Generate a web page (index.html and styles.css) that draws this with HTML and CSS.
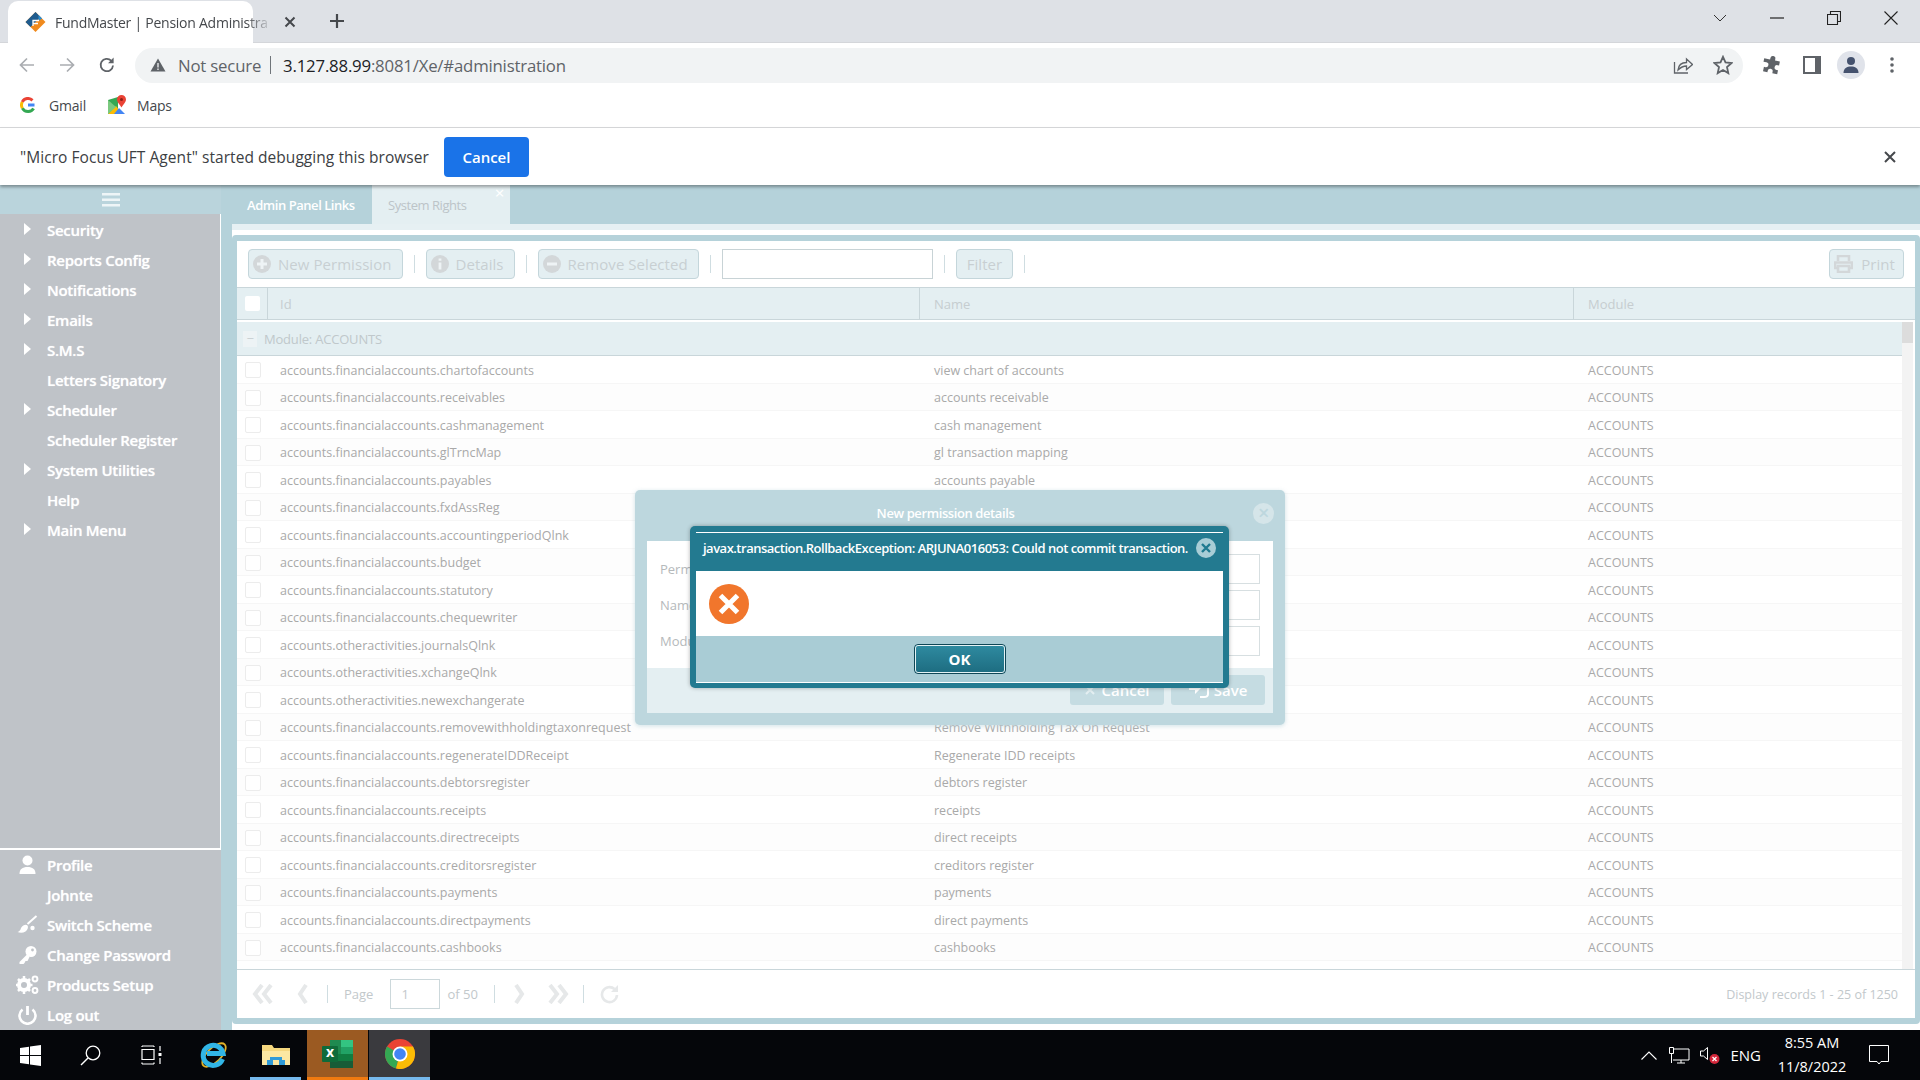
FILE: index.html
```html
<!DOCTYPE html>
<html lang="en">
<head>
    <meta charset="UTF-8">
    <title>FundMaster | Pension Administration</title>
    <link rel="stylesheet" href="styles.css">
</head>
<body>

    <!-- Browser tab strip -->
    <div class="tabstrip">
        <div class="browser-tab">
            <svg class="favicon" width="21" height="20" viewBox="0 0 20 20"><path d="M10 0 L20 10 L10 20 L0 10 Z" fill="#f08a1d"/><path d="M10 0 L0 10 L5 15 L13 7 L16.500 6.500Z" fill="#1f5c8f"/><path d="M13 3 L16.500 6.500 L13 9Z" fill="#2f8fd0"/><path d="M7.500 14V8.500h6M7.500 11.500h5" fill="none" stroke="#fff" stroke-width="1.300"/></svg>
            <span class="browser-tab-title">FundMaster | Pension Administra</span>
            <svg class="tab-close" width="12" height="12" viewBox="0 0 12 12"><path d="M1.500 1.500l9 9M10.500 1.500l-9 9" stroke="#45484c" stroke-width="2"/></svg>
        </div>
        <svg class="new-tab" width="16" height="16" viewBox="0 0 16 16"><path d="M8 1v14M1 8h14" stroke="#45484c" stroke-width="2.200"/></svg>
        <div class="window-controls">
            <svg width="14" height="14" viewBox="0 0 14 14"><path d="M1 4l6 6 6-6" fill="none" stroke="#333" stroke-width="1"/></svg>
            <svg width="14" height="14" viewBox="0 0 14 14"><path d="M0 7h14" stroke="#222" stroke-width="1.200"/></svg>
            <svg width="14" height="14" viewBox="0 0 14 14"><path d="M.5 3.500h10v10H.5zM3.500 3.500V.5h10v10h-3" fill="none" stroke="#222" stroke-width="1.100"/></svg>
            <svg width="14" height="14" viewBox="0 0 14 14"><path d="M.5.5l13 13M13.500.5l-13 13" stroke="#222" stroke-width="1.100"/></svg>
        </div>
    </div>

    <!-- Address bar -->
    <div class="toolbar">
        <svg class="nav-icon" width="18" height="18" viewBox="0 0 18 18"><path d="M16 9H3M9 2.500L2.500 9 9 15.500" fill="none" stroke="#aaadb1" stroke-width="1.700"/></svg>
        <svg class="nav-icon" width="18" height="18" viewBox="0 0 18 18"><path d="M2 9h13M9 2.500L15.500 9 9 15.500" fill="none" stroke="#aaadb1" stroke-width="1.700"/></svg>
        <svg class="nav-icon" width="18" height="18" viewBox="0 0 18 18"><path d="M15 9.500A6.200 6.200 0 1 1 13.200 4.600" fill="none" stroke="#5f6368" stroke-width="1.800"/><path d="M15.600 1.600v5.600H10z" fill="#5f6368"/></svg>
        <div class="omnibox">
            <svg width="16" height="16" viewBox="0 0 16 16"><path d="M8 1.500L15.500 14.500H.5Z" fill="#5f6368"/><path d="M8 6v4.500M8 11.500v1.500" stroke="#f1f3f4" stroke-width="1.300"/></svg>
            <span class="not-secure">Not secure</span>
            <span class="url-sep"></span>
            <span class="url"><b>3.127.88.99</b>:8081/Xe/#administration</span>
            <svg class="omni-share" width="20" height="20" viewBox="0 0 20 20"><path d="M1.500 7v11h13.500M5 15c.5-5 4-7.500 8.500-7.500V4l6 5.500-6 5v-3.500C10 11 7.500 12.500 5 15z" fill="none" stroke="#5f6368" stroke-width="1.300"/></svg>
            <svg class="omni-star" width="20" height="20" viewBox="0 0 20 20"><path d="M10 1.800l2.500 5.600 6.100.6-4.600 4.100 1.300 6-5.300-3.100-5.300 3.100 1.300-6L1.400 8l6.100-.6z" fill="none" stroke="#5f6368" stroke-width="1.800"/></svg>
        </div>
        <div class="toolbar-actions">
            <svg width="20" height="20" viewBox="0 0 20 20"><path d="M7 3.500a2.500 2.500 0 0 1 5 0V5h5v4h-1.500a2.500 2.500 0 0 0 0 5H17v4h-5v-1.500a2.500 2.500 0 0 0-5 0V18H2.500v-4.500H4a2.500 2.500 0 0 0 0-5H1V5h6z" fill="#5f6368" transform="rotate(12 10 10)"/></svg>
            <svg width="18" height="18" viewBox="0 0 18 18"><rect x="0" y="0" width="18" height="18" fill="#5f6368"/><rect x="2" y="2" width="10" height="14" fill="#fff"/></svg>
            <span class="avatar"><svg width="18" height="18" viewBox="0 0 18 18"><circle cx="9" cy="5" r="4" fill="#45526e"/><path d="M1.500 17c0-5 3.500-6.500 7.500-6.500s7.500 1.500 7.500 6.500z" fill="#45526e"/></svg></span>
            <svg class="toolbar-dots" width="6" height="18" viewBox="0 0 6 18"><circle cx="3" cy="3" r="1.800" fill="#5f6368"/><circle cx="3" cy="9" r="1.800" fill="#5f6368"/><circle cx="3" cy="15" r="1.800" fill="#5f6368"/></svg>
        </div>
    </div>

    <!-- Bookmarks -->
    <div class="bookmarks">
        <span class="bookmark">
            <svg width="16" height="16" viewBox="0 0 16 16"><path d="M14.500 8H8" stroke="#4285f4" stroke-width="3"/><path d="M13.600 11.500A6.500 6.500 0 0 1 8 14.500" fill="none" stroke="#34a853" stroke-width="3"/><path d="M8 14.500a6.500 6.500 0 0 1-5.700-3.400" fill="none" stroke="#34a853" stroke-width="3"/><path d="M2.300 11.100a6.500 6.500 0 0 1 0-6.200" fill="none" stroke="#fbbc05" stroke-width="3"/><path d="M2.300 4.900A6.500 6.500 0 0 1 12.500 3.300" fill="none" stroke="#ea4335" stroke-width="3"/></svg>
            Gmail
        </span>
        <span class="bookmark bookmark-maps">
            <svg width="20" height="20" viewBox="0 0 20 20"><path d="M1 5l10-3v16l-10 1z" fill="#34a853"/><path d="M1 19l8-8 6 8z" fill="#fbbc05"/><path d="M7 19l5-6 6 6z" fill="#4285f4"/><path d="M1 5l8 7-8 7z" fill="#7bc97f"/><path d="M14.500 0a4.500 4.500 0 0 1 4.500 4.500c0 3-3 5-4.500 8-1.500-3-4.500-5-4.500-8A4.500 4.500 0 0 1 14.500 0z" fill="#ea4335"/><circle cx="14.500" cy="4.500" r="1.500" fill="#8f1f17"/></svg>
            Maps
        </span>
    </div>

    <!-- Debugging notice -->
    <div class="infobar">
        <span class="infobar-text">"Micro Focus UFT Agent" started debugging this browser</span>
        <button class="infobar-cancel">Cancel</button>
        <svg class="infobar-close" width="12" height="12" viewBox="0 0 12 12"><path d="M1 1l10 10M11 1L1 11" stroke="#45484c" stroke-width="2"/></svg>
    </div>

    <!-- Application -->
    <div class="app">
        <div class="sidebar">
            <div class="sidebar-head">
                <svg width="18" height="14" viewBox="0 0 18 14"><path d="M0 0h18v2.500H0zM0 5.500h18V8H0zM0 11h18v2.500H0z" fill="#eef5f7"/></svg>
            </div>
            <ul class="menu">
                <li class="has-sub">Security</li>
                <li class="has-sub">Reports Config</li>
                <li class="has-sub">Notifications</li>
                <li class="has-sub">Emails</li>
                <li class="has-sub">S.M.S</li>
                <li>Letters Signatory</li>
                <li class="has-sub">Scheduler</li>
                <li>Scheduler Register</li>
                <li class="has-sub">System Utilities</li>
                <li>Help</li>
                <li class="has-sub">Main Menu</li>
            </ul>
            <ul class="user-menu">
                <li><svg width="22" height="20" viewBox="0 0 22 20"><circle cx="11" cy="5.500" r="5" fill="#fff"/><path d="M3 19c0-5 3-7 8-7s8 2 8 7z" fill="#fff"/></svg>Profile</li>
                <li><span class="icon-gap"></span>Johnte</li>
                <li><svg width="22" height="20" viewBox="0 0 22 20"><path d="M1 17c2-.5 3-2 3.500-4 2-3 5-4 6.500-2.500 1 1.500.5 4-2 6-2.500 1.500-5.500 1.500-8 .5z" fill="#fff"/><path d="M11 9l9-8" stroke="#fff" stroke-width="2"/><circle cx="16" cy="13" r="2.200" fill="#fff"/></svg>Switch Scheme</li>
                <li><svg width="22" height="20" viewBox="0 0 22 20"><circle cx="14.500" cy="6.500" r="5.500" fill="#fff"/><path d="M11 9l-8 8v2h4l1-1 1-2h2l2-4z" fill="#fff"/><circle cx="16" cy="5" r="1.400" fill="#bfc3c8"/></svg>Change Password</li>
                <li><svg width="23" height="20" viewBox="0 0 23 20"><circle cx="8" cy="10" r="5" fill="none" stroke="#fff" stroke-width="4"/><path d="M8 1v4M8 15v4M-.5 10h4M12.500 10h4M2 4l2.500 2.500M11.500 13.500L14 16M2 16l2.500-2.500M11.500 6.500L14 4" stroke="#fff" stroke-width="2.500"/><circle cx="19" cy="4" r="2.400" fill="none" stroke="#fff" stroke-width="2"/><circle cx="19" cy="15.500" r="2.400" fill="none" stroke="#fff" stroke-width="2"/></svg>Products Setup</li>
                <li><svg width="22" height="20" viewBox="0 0 22 20"><path d="M6 4.500a8 8 0 1 0 10 0" fill="none" stroke="#fff" stroke-width="2.600"/><path d="M11 1v9" stroke="#fff" stroke-width="2.800"/></svg>Log out</li>
            </ul>
        </div>

        <div class="main-content">
            <div class="tabbar">
                <div class="app-tab app-tab-active">Admin Panel Links</div>
                <div class="app-tab app-tab-open">System Rights<span class="app-tab-x">×</span></div>
            </div>
            <div class="tabbar-strip"></div>

            <div class="panel">
                <div class="grid-toolbar">
                    <button class="tool-btn tool-btn-new"><svg width="18" height="18" viewBox="0 0 18 18"><circle cx="9" cy="9" r="9" fill="#d3d7d9"/><path d="M9 4v10M4 9h10" stroke="#eef3f5" stroke-width="3"/></svg>New Permission</button>
                    <span class="tool-sep"></span>
                    <button class="tool-btn"><svg width="18" height="18" viewBox="0 0 18 18"><circle cx="9" cy="9" r="9" fill="#d3d7d9"/><path d="M9 7.500v7M9 3.500v2.200" stroke="#eef3f5" stroke-width="2.800"/></svg>Details</button>
                    <span class="tool-sep"></span>
                    <button class="tool-btn"><svg width="18" height="18" viewBox="0 0 18 18"><circle cx="9" cy="9" r="9" fill="#d3d7d9"/><path d="M4 9h10" stroke="#eef3f5" stroke-width="3"/></svg>Remove Selected</button>
                    <span class="tool-sep"></span>
                    <input class="filter-input" type="text">
                    <span class="tool-sep"></span>
                    <button class="tool-btn">Filter</button>
                    <span class="tool-sep"></span>
                    <button class="tool-btn tool-btn-print"><svg width="19" height="18" viewBox="0 0 19 18"><path d="M4 6V1h11v5M4 13H1V7.500h17V13h-3M4 11h11v6H4z" fill="none" stroke="#d3d7d9" stroke-width="2.600"/></svg>Print</button>
                </div>

                <div class="grid-head">
                    <div class="col-check"><span class="head-check"></span></div>
                    <div class="col-id">Id</div>
                    <div class="col-name">Name</div>
                    <div class="col-module">Module</div>
                </div>

                <div class="grid-scroll">
                    <div class="grid-body">
                        <div class="group-row"><span class="group-toggle">−</span>Module: ACCOUNTS</div>
                        <div class="row"><div class="col-check"><span class="check"></span></div><div class="col-id">accounts.financialaccounts.chartofaccounts</div><div class="col-name">view chart of accounts</div><div class="col-module">ACCOUNTS</div></div>
                        <div class="row"><div class="col-check"><span class="check"></span></div><div class="col-id">accounts.financialaccounts.receivables</div><div class="col-name">accounts receivable</div><div class="col-module">ACCOUNTS</div></div>
                        <div class="row"><div class="col-check"><span class="check"></span></div><div class="col-id">accounts.financialaccounts.cashmanagement</div><div class="col-name">cash management</div><div class="col-module">ACCOUNTS</div></div>
                        <div class="row"><div class="col-check"><span class="check"></span></div><div class="col-id">accounts.financialaccounts.glTrncMap</div><div class="col-name">gl transaction mapping</div><div class="col-module">ACCOUNTS</div></div>
                        <div class="row"><div class="col-check"><span class="check"></span></div><div class="col-id">accounts.financialaccounts.payables</div><div class="col-name">accounts payable</div><div class="col-module">ACCOUNTS</div></div>
                        <div class="row"><div class="col-check"><span class="check"></span></div><div class="col-id">accounts.financialaccounts.fxdAssReg</div><div class="col-name"></div><div class="col-module">ACCOUNTS</div></div>
                        <div class="row"><div class="col-check"><span class="check"></span></div><div class="col-id">accounts.financialaccounts.accountingperiodQlnk</div><div class="col-name"></div><div class="col-module">ACCOUNTS</div></div>
                        <div class="row"><div class="col-check"><span class="check"></span></div><div class="col-id">accounts.financialaccounts.budget</div><div class="col-name"></div><div class="col-module">ACCOUNTS</div></div>
                        <div class="row"><div class="col-check"><span class="check"></span></div><div class="col-id">accounts.financialaccounts.statutory</div><div class="col-name"></div><div class="col-module">ACCOUNTS</div></div>
                        <div class="row"><div class="col-check"><span class="check"></span></div><div class="col-id">accounts.financialaccounts.chequewriter</div><div class="col-name"></div><div class="col-module">ACCOUNTS</div></div>
                        <div class="row"><div class="col-check"><span class="check"></span></div><div class="col-id">accounts.otheractivities.journalsQlnk</div><div class="col-name"></div><div class="col-module">ACCOUNTS</div></div>
                        <div class="row"><div class="col-check"><span class="check"></span></div><div class="col-id">accounts.otheractivities.xchangeQlnk</div><div class="col-name"></div><div class="col-module">ACCOUNTS</div></div>
                        <div class="row"><div class="col-check"><span class="check"></span></div><div class="col-id">accounts.otheractivities.newexchangerate</div><div class="col-name"></div><div class="col-module">ACCOUNTS</div></div>
                        <div class="row"><div class="col-check"><span class="check"></span></div><div class="col-id">accounts.financialaccounts.removewithholdingtaxonrequest</div><div class="col-name">Remove Withholding Tax On Request</div><div class="col-module">ACCOUNTS</div></div>
                        <div class="row"><div class="col-check"><span class="check"></span></div><div class="col-id">accounts.financialaccounts.regenerateIDDReceipt</div><div class="col-name">Regenerate IDD receipts</div><div class="col-module">ACCOUNTS</div></div>
                        <div class="row"><div class="col-check"><span class="check"></span></div><div class="col-id">accounts.financialaccounts.debtorsregister</div><div class="col-name">debtors register</div><div class="col-module">ACCOUNTS</div></div>
                        <div class="row"><div class="col-check"><span class="check"></span></div><div class="col-id">accounts.financialaccounts.receipts</div><div class="col-name">receipts</div><div class="col-module">ACCOUNTS</div></div>
                        <div class="row"><div class="col-check"><span class="check"></span></div><div class="col-id">accounts.financialaccounts.directreceipts</div><div class="col-name">direct receipts</div><div class="col-module">ACCOUNTS</div></div>
                        <div class="row"><div class="col-check"><span class="check"></span></div><div class="col-id">accounts.financialaccounts.creditorsregister</div><div class="col-name">creditors register</div><div class="col-module">ACCOUNTS</div></div>
                        <div class="row"><div class="col-check"><span class="check"></span></div><div class="col-id">accounts.financialaccounts.payments</div><div class="col-name">payments</div><div class="col-module">ACCOUNTS</div></div>
                        <div class="row"><div class="col-check"><span class="check"></span></div><div class="col-id">accounts.financialaccounts.directpayments</div><div class="col-name">direct payments</div><div class="col-module">ACCOUNTS</div></div>
                        <div class="row"><div class="col-check"><span class="check"></span></div><div class="col-id">accounts.financialaccounts.cashbooks</div><div class="col-name">cashbooks</div><div class="col-module">ACCOUNTS</div></div>
                    </div>
                    <div class="scrollbar"><span class="scroll-thumb"></span></div>
                </div>

                <div class="pager">
                    <svg class="pager-first" width="22" height="20" viewBox="0 0 22 20"><path d="M10 1L3 10l7 9M19 1l-7 9 7 9" fill="none" stroke="#e6e8e9" stroke-width="4"/></svg>
                    <svg class="pager-prev" width="12" height="20" viewBox="0 0 12 20"><path d="M9 1L3 10l6 9" fill="none" stroke="#e6e8e9" stroke-width="4"/></svg>
                    <span class="pager-sep"></span>
                    <span class="pager-text">Page</span>
                    <input class="pager-input" type="text" value="1">
                    <span class="pager-text">of 50</span>
                    <span class="pager-sep"></span>
                    <svg class="pager-next" width="12" height="20" viewBox="0 0 12 20"><path d="M3 1l6 9-6 9" fill="none" stroke="#e6e8e9" stroke-width="4"/></svg>
                    <svg class="pager-last" width="22" height="20" viewBox="0 0 22 20"><path d="M3 1l7 9-7 9M12 1l7 9-7 9" fill="none" stroke="#e6e8e9" stroke-width="4"/></svg>
                    <span class="pager-sep"></span>
                    <svg class="pager-refresh" width="20" height="20" viewBox="0 0 20 20"><path d="M17 11a7.500 7.500 0 1 1-2.500-6" fill="none" stroke="#e6e8e9" stroke-width="2.600"/><path d="M18 1v7h-7z" fill="#e6e8e9"/></svg>
                    <span class="pager-count">Display records 1 - 25 of 1250</span>
                </div>
            </div>
        </div>

        <!-- New permission window behind the error -->
        <div class="perm-window">
            <div class="perm-title">New permission details<span class="perm-close">×</span></div>
            <div class="perm-body">
                <div class="perm-field"><label>Permission</label><span class="perm-input"></span></div>
                <div class="perm-field"><label>Name</label><span class="perm-input"></span></div>
                <div class="perm-field"><label>Module</label><span class="perm-input"></span></div>
            </div>
            <div class="perm-footer">
                <span class="perm-btn"><svg width="12" height="12" viewBox="0 0 12 12"><path d="M2 2l8 8M10 2l-8 8" stroke="#e4eff2" stroke-width="2"/></svg>Cancel</span>
                <span class="perm-btn"><svg width="20" height="16" viewBox="0 0 20 16"><path d="M0 4h6V0l6 6-6 6V8H0z" fill="#fff"/><path d="M14 1h5v11q0 3-4 3h-4" fill="none" stroke="#fff" stroke-width="2"/></svg>Save</span>
            </div>
        </div>

        <!-- Error message -->
        <div class="alert">
            <div class="alert-inner">
                <div class="alert-title">
                    <span class="alert-text">javax.transaction.RollbackException: ARJUNA016053: Could not commit transaction.</span>
                    <span class="alert-close"><svg width="10" height="10" viewBox="0 0 10 10"><path d="M1 1l8 8M9 1L1 9" stroke="#1f7a90" stroke-width="2.400"/></svg></span>
                </div>
                <div class="alert-body">
                    <svg width="40" height="40" viewBox="0 0 40 40"><circle cx="20" cy="20" r="20" fill="#f1762c"/><path d="M11.500 11.500l17 17M28.500 11.500l-17 17" stroke="#fff" stroke-width="5"/></svg>
                </div>
                <div class="alert-footer">
                    <button class="alert-ok">OK</button>
                </div>
            </div>
        </div>
    </div>

    <!-- Windows taskbar -->
    <div class="taskbar">
        <div class="task-item">
            <svg width="21" height="21" viewBox="0 0 21 21"><path d="M0 3l9-1.300V10H0zM10 1.500L21 0v10H10zM0 11h9v8.300L0 18zM10 11h11v10l-11-1.500z" fill="#fff"/></svg>
        </div>
        <div class="task-item">
            <svg width="21" height="21" viewBox="0 0 21 21"><circle cx="13" cy="8" r="6.800" fill="none" stroke="#fff" stroke-width="1.300"/><path d="M8 13L1 20" stroke="#fff" stroke-width="1.500"/></svg>
        </div>
        <div class="task-item">
            <svg width="21" height="20" viewBox="0 0 21 20"><path d="M1 4.500h12v10H1zM1 1v1M13 1v1M1 17.500v1.500M13 17.500v1.500M1 1h12M1 19h12M19 1v5M19 13v6" fill="none" stroke="#fff" stroke-width="1.200"/><rect x="17.500" y="8" width="3" height="3" fill="#fff"/></svg>
        </div>
        <div class="task-item">
            <svg width="30" height="30" viewBox="0 0 30 30"><ellipse cx="15" cy="15" rx="15" ry="7" fill="none" stroke="#e3b32a" stroke-width="1.800" transform="rotate(-45 15 15)"/><path d="M23.500 19A10 10 0 1 1 24 13.500H8" fill="none" stroke="#31b5e6" stroke-width="5"/></svg>
        </div>
        <div class="task-item task-running">
            <svg width="28" height="24" viewBox="0 0 28 24"><path d="M0 2h10l2 3h16v16H0z" fill="#f5d77e"/><path d="M0 8h28v14H0z" fill="#fbe7a2"/><path d="M8 14h12v3h3v5H5v-5h3z" fill="#2f9ad8"/><path d="M11 17h6v5h-6z" fill="#fbe7a2"/></svg>
        </div>
        <div class="task-item task-excel">
            <svg width="31" height="28" viewBox="0 0 31 28"><path d="M8 0h23v28H8z" fill="#1f8a50"/><path d="M19 0h12v7H19z" fill="#33c481"/><path d="M19 7h12v7H19z" fill="#21a366"/><path d="M8 14h23v7H8z" fill="#107c41"/><path d="M8 21h23v7H8z" fill="#185c37"/><rect x="0" y="6" width="16" height="16" rx="1" fill="#0f6b3a"/></svg>
            <span class="excel-x">x</span>
        </div>
        <div class="task-item task-chrome">
            <svg width="30" height="30" viewBox="0 0 30 30"><circle cx="15" cy="15" r="15" fill="#ea4335"/><path d="M15 15L2 7.500A15 15 0 0 0 11 29.500z" fill="#34a853"/><path d="M15 15l-4 14.500A15 15 0 0 0 28 7.500H15z" fill="#fbbc05"/><circle cx="15" cy="15" r="7.500" fill="#fff"/><circle cx="15" cy="15" r="5.800" fill="#4285f4"/></svg>
        </div>
        <div class="tray">
            <svg class="tray-chevron" width="16" height="9" viewBox="0 0 16 9"><path d="M.5 8.500L8 1l7.500 7.500" fill="none" stroke="#fff" stroke-width="1.100"/></svg>
            <svg class="tray-net" width="21" height="17" viewBox="0 0 21 17"><path d="M4 2h16v11H4M12 13v3M8 16h8M.5.500h4v6h-4zM2.500 6.500V16" fill="none" stroke="#fff" stroke-width="1"/></svg>
            <span class="tray-sound">
                <svg width="20" height="20" viewBox="0 0 20 20"><path d="M.5 6h3l4-3.500v12l-4-3.500h-3z" fill="none" stroke="#fff" stroke-width="1"/><circle cx="14.500" cy="14" r="5" fill="#d3263a"/><path d="M12.500 12l4 4M16.500 12l-4 4" stroke="#fff" stroke-width="1.200"/></svg>
            </span>
            <span class="tray-lang">ENG</span>
            <span class="tray-clock"><span>8:55 AM</span><span>11/8/2022</span></span>
            <svg class="tray-notify" width="20" height="20" viewBox="0 0 20 20"><path d="M.5.500h19v16H12l-2 2.500-2-2.500H.5z" fill="none" stroke="#fff" stroke-width="1"/></svg>
        </div>
    </div>

</body>
</html>
```

FILE: styles.css
```css
* {
    box-sizing: border-box;
}
html, body {
    margin: 0;
    height: 100%;
}
body {
    width: 1920px;
    height: 1080px;
    display: flex;
    flex-direction: column;
    overflow: hidden;
    font-family: "Open Sans", sans-serif;
    background-color: #fff;
}

/* Browser frame */
.tabstrip {
    height: 43px;
    flex: none;
    display: flex;
    align-items: flex-end;
    background-color: #dee1e6;
    border-bottom: 1px solid #d4d6da;
    padding-left: 8px;
}
.browser-tab {
    width: 245px;
    height: 42px;
    flex: none;
    display: flex;
    align-items: center;
    padding-left: 17px;
    background-color: #fff;
    border-radius: 10px 10px 0 0;
    margin-bottom: -1px;
}
.favicon {
    flex: none;
}
.browser-tab-title {
    margin-left: 9px;
    width: 218px;
    flex: none;
    font-size: 14px;
    letter-spacing: -0.25px;
    color: #45484c;
    white-space: nowrap;
    overflow: hidden;
    -webkit-mask-image: linear-gradient(to right, #000 88%, transparent);
    mask-image: linear-gradient(to right, #000 88%, transparent);
}
.tab-close {
    flex: none;
    margin-left: 11px;
}
.new-tab {
    margin: 0 0 13px 76px;
}
.window-controls {
    margin-left: auto;
    display: flex;
    align-items: center;
    gap: 43px;
    padding-right: 22px;
    margin-bottom: 17px;
}
.toolbar {
    height: 42px;
    flex: none;
    display: flex;
    align-items: center;
    background-color: #fff;
    padding-left: 18px;
    padding-top: 2px;
}
.nav-icon {
    flex: none;
    margin-right: 22px;
}
.omnibox {
    margin-left: -3px;
    width: 1608px;
    height: 35px;
    flex: none;
    display: flex;
    align-items: center;
    padding-left: 15px;
    background-color: #f1f3f4;
    border-radius: 18px;
    font-size: 16.800px;
    letter-spacing: -0.2px;
    color: #5f6368;
}
.not-secure {
    margin-left: 12px;
}
.url-sep {
    width: 1px;
    height: 18px;
    margin: 0 12px 0 9px;
    background-color: #70757a;
}
.url b {
    font-weight: 400;
    color: #202124;
}
.omni-share {
    margin-left: auto;
}
.omni-star {
    margin: 0 10px 0 20px;
}
.toolbar-actions {
    display: flex;
    align-items: center;
    margin-left: 19px;
    gap: 21px;
}
.toolbar-dots {
    margin-left: 3px;
}
.avatar {
    width: 28px;
    height: 28px;
    border-radius: 50%;
    background-color: #e0e3ea;
    display: flex;
    align-items: center;
    justify-content: center;
    margin-left: -5px;
}
.bookmarks {
    height: 43px;
    flex: none;
    display: flex;
    align-items: center;
    gap: 22px;
    padding-left: 20px;
    padding-bottom: 2px;
    background-color: #fff;
    border-bottom: 1px solid #d8d9db;
    font-size: 14px;
    letter-spacing: -0.2px;
    color: #45484c;
}
.bookmark {
    display: flex;
    align-items: center;
    gap: 13px;
}
.bookmark-maps {
    gap: 10px;
    margin-left: -1px;
}
.infobar {
    height: 57px;
    flex: none;
    display: flex;
    align-items: center;
    padding-left: 20px;
    background-color: #fff;
    box-shadow: 0 2px 3px rgba(0, 0, 0, 0.35);
    position: relative;
    z-index: 5;
    font-size: 15.500px;
    letter-spacing: 0.05px;
    color: #3c4043;
}
.infobar-cancel {
    margin-left: 15px;
    width: 85px;
    height: 40px;
    border: none;
    border-radius: 4px;
    background-color: #1a73e8;
    color: #fff;
    font-family: "Open Sans", sans-serif;
    font-size: 15px;
    font-weight: 600;
}
.infobar-close {
    margin-left: auto;
    margin-right: 24px;
}

/* Application shell */
.app {
    height: 845px;
    flex: none;
    display: flex;
    position: relative;
}
.sidebar {
    width: 221px;
    flex: none;
    display: flex;
    flex-direction: column;
    background-color: #bfc3c8;
    color: #fff;
    font-size: 15px;
    font-weight: 600;
    letter-spacing: -0.27px;
    text-shadow: 0 0 1px rgba(255, 255, 255, 0.7);
}
.sidebar-head {
    height: 29px;
    display: flex;
    align-items: center;
    justify-content: center;
    background-color: #bad4dc;
}
.menu, .user-menu {
    list-style: none;
    margin: 0;
    padding: 0;
}
.menu {
    height: 636px;
    padding-top: 1px;
    border-right: 1px solid #fff;
    border-bottom: 2px solid #fff;
}
.menu li {
    height: 30px;
    line-height: 30px;
    padding-left: 47px;
    position: relative;
}
.menu li.has-sub::before {
    content: "";
    position: absolute;
    left: 24px;
    top: 8px;
    border-left: 7px solid #fff;
    border-top: 6px solid transparent;
    border-bottom: 6px solid transparent;
}
.user-menu li {
    height: 30px;
    display: flex;
    align-items: center;
    padding-left: 16px;
}
.user-menu svg {
    flex: none;
    width: 23px;
    margin-right: 8px;
}
.icon-gap {
    width: 31px;
}
.main-content {
    flex: 1;
    min-width: 0;
    display: flex;
    flex-direction: column;
    background: linear-gradient(to right, #b5d2da 11px, #fff 11px);
}
.tabbar {
    height: 39px;
    flex: none;
    display: flex;
    padding-left: 9px;
    background-color: #b5d2da;
}
.app-tab {
    display: flex;
    align-items: center;
    font-size: 13px;
    letter-spacing: -0.45px;
    position: relative;
}
.app-tab-active {
    width: 142px;
    padding-left: 17px;
    color: #fff;
    font-weight: 600;
}
.app-tab-open {
    width: 138px;
    padding-left: 16px;
    background-color: #e4eff2;
    color: #bcc4c8;
}
.app-tab-x {
    position: absolute;
    right: 6px;
    top: 0;
    line-height: 16px;
    font-size: 17px;
    color: #fff;
}
.tabbar-strip {
    height: 11px;
    flex: none;
    background: linear-gradient(#e6f0f3 6px, #fff 6px);
    margin-left: 11px;
}
.panel {
    height: 789px;
    flex: none;
    margin-left: 11px;
    display: flex;
    flex-direction: column;
    border: 6px solid #b5d2da;
    border-left-width: 5px;
    border-right-width: 5px;
    border-radius: 4px;
    background-color: #fff;
}

/* Grid */
.grid-toolbar {
    height: 46px;
    flex: none;
    display: flex;
    align-items: center;
    padding: 0 11px 0 11px;
}
.tool-btn {
    height: 30px;
    display: flex;
    align-items: center;
    gap: 7px;
    padding: 0 10px 0 4px;
    background-color: #e4eff2;
    border: 1px solid #c4d6db;
    border-radius: 4px;
    font-family: "Open Sans", sans-serif;
    font-size: 15px;
    letter-spacing: 0.05px;
    color: #c8cfd2;
}
.tool-sep {
    width: 1px;
    height: 18px;
    margin: 0 11px;
    background-color: #cfdde1;
}
.filter-input {
    width: 211px;
    height: 30px;
    border: 1px solid #c8d3d6;
    background-color: #fff;
}
.tool-btn-print {
    margin-left: auto;
    padding-right: 8px;
    gap: 8px;
}
.tool-btn:nth-of-type(4) {
    padding-left: 10px;
}
.grid-head {
    height: 33px;
    flex: none;
    display: flex;
    align-items: stretch;
    background-color: #e4eff2;
    border-top: 1px solid #c9d6da;
    border-bottom: 1px solid #c9d6da;
    font-size: 13px;
    color: #c6cdd0;
}
.grid-head > div {
    display: flex;
    align-items: center;
    border-right: 1px solid #c9d6da;
}
.grid-head > div:last-child {
    border-right: none;
}
.col-check {
    width: 31px;
    flex: none;
    padding-left: 8px;
    display: flex;
    align-items: center;
}
.col-id {
    width: 652px;
    flex: none;
    padding-left: 12px;
    white-space: nowrap;
}
.col-name {
    width: 654px;
    flex: none;
    padding-left: 14px;
    white-space: nowrap;
}
.col-module {
    flex: 1;
    padding-left: 14px;
}
.head-check {
    width: 15px;
    height: 15px;
    background-color: #fff;
    border-radius: 2px;
}
.grid-scroll {
    height: 650px;
    flex: none;
    display: flex;
    overflow: hidden;
    padding-top: 2px;
    border-bottom: 1px solid #c9d6da;
}
.grid-body {
    width: 1665px;
    flex: none;
}
.group-row {
    height: 34px;
    display: flex;
    align-items: center;
    gap: 7px;
    padding-left: 6px;
    background-color: #e4eff2;
    border-bottom: 1px solid #c9d6da;
    font-size: 13px;
    letter-spacing: -0.2px;
    color: #c0c8cb;
}
.group-toggle {
    width: 14px;
    height: 16px;
    line-height: 15px;
    text-align: center;
    background-color: #edf3f5;
    color: #c8cfd2;
}
.row {
    height: 27.5px;
    display: flex;
    align-items: center;
    padding-top: 2px;
    border-bottom: 1px solid #f6f6f6;
    font-size: 12.500px;
    color: #a9a9a9;
}
.row:nth-child(odd) {
    background-color: #fdfdfd;
}
.check {
    width: 16px;
    height: 16px;
    border: 1px solid #ececec;
    border-radius: 2px;
    background-color: #fff;
}
.scrollbar {
    width: 11px;
    flex: none;
    background-color: #f3f3f3;
}
.scroll-thumb {
    display: block;
    height: 21px;
    background-color: #dcdcdc;
}
.pager {
    flex: 1;
    display: flex;
    align-items: center;
    padding-left: 15px;
    padding-right: 17px;
    font-size: 13px;
    color: #c2c8cb;
}
.pager-first {
    margin-right: 23px;
}
.pager-prev {
    margin-right: 18px;
}
.pager-sep {
    width: 1px;
    height: 18px;
    background-color: #cfdde1;
}
.pager-text {
    margin: 0 16px;
}
.pager-input {
    width: 50px;
    height: 30px;
    margin: 0 -9px 0 1px;
    padding-left: 10px;
    border: 1px solid #ccd8db;
    font-family: "Open Sans", sans-serif;
    font-size: 13px;
    color: #c2c8cb;
}
.pager-next {
    margin: 0 22px 0 18px;
}
.pager-last {
    margin-right: 14px;
}
.pager-refresh {
    margin-left: 16px;
}
.pager-count {
    margin-left: auto;
    font-size: 12.500px;
}

/* New permission window */
.perm-window {
    position: absolute;
    left: 635px;
    top: 305px;
    width: 650px;
    height: 235px;
    padding: 0 12px 12px;
    display: flex;
    flex-direction: column;
    background-color: #bdd7de;
    border-radius: 5px;
    box-shadow: 0 1px 4px rgba(189, 215, 222, 0.7);
}
.perm-title {
    height: 51px;
    flex: none;
    display: flex;
    align-items: center;
    justify-content: center;
    position: relative;
    padding-bottom: 6px;
    padding-right: 29px;
    font-size: 13px;
    font-weight: 600;
    letter-spacing: -0.4px;
    color: #fff;
}
.perm-close {
    position: absolute;
    right: -1px;
    top: 13px;
    width: 21px;
    height: 21px;
    border-radius: 50%;
    background-color: #d5e5e9;
    line-height: 20px;
    text-align: center;
    font-size: 20px;
    color: #bdd7de;
}
.perm-body {
    height: 127px;
    flex: none;
    padding: 13px 13px 0 13px;
    display: flex;
    flex-direction: column;
    gap: 6px;
    background-color: #fff;
}
.perm-field {
    height: 30px;
    flex: none;
    display: flex;
    align-items: center;
    justify-content: space-between;
    font-size: 13px;
    color: #b5b9bb;
}
.perm-input {
    width: 400px;
    height: 30px;
    border: 1px solid #d7dfe1;
}
.perm-footer {
    flex: 1;
    display: flex;
    justify-content: flex-end;
    gap: 7px;
    padding: 7px 8px 0 0;
    background-color: #e4eff2;
}
.perm-btn {
    width: 94px;
    height: 30px;
    display: flex;
    align-items: center;
    justify-content: center;
    gap: 5px;
    background-color: #c5dce2;
    border-radius: 3px;
    font-size: 15px;
    font-weight: 600;
    color: #fff;
}

/* Error message */
.alert {
    position: absolute;
    left: 690px;
    top: 341px;
    width: 539px;
    height: 162px;
    padding: 6px 6px 5px;
    background-color: #237a90;
    border-radius: 5px;
    box-shadow: 0 0 4px rgba(0, 0, 0, 0.3);
}
.alert-inner {
    height: 100%;
    display: flex;
    flex-direction: column;
    border-top: 1px solid #fff;
    border-bottom: 1px solid #fff;
}
.alert-title {
    height: 38px;
    flex: none;
    display: flex;
    align-items: center;
    padding-left: 7px;
    padding-bottom: 8px;
    background-color: #237a90;
    color: #fff;
    font-size: 13px;
    font-weight: 600;
    letter-spacing: -0.5px;
    white-space: nowrap;
}
.alert-close {
    position: absolute;
    right: 13px;
    top: 12px;
    width: 20px;
    height: 20px;
    border-radius: 50%;
    background-color: #a8cdd6;
    display: flex;
    align-items: center;
    justify-content: center;
}
.alert-body {
    height: 65px;
    flex: none;
    padding: 13px 0 0 13px;
    background-color: #fff;
}
.alert-footer {
    flex: 1;
    display: flex;
    justify-content: center;
    padding-top: 8px;
    background-color: #a9ccd5;
}
.alert-ok {
    width: 92px;
    height: 30px;
    background: linear-gradient(#2f8ba1, #1d6c80);
    border: 1px solid #0f4757;
    outline: 1px solid #e4f2f5;
    outline-offset: -2px;
    border-radius: 4px;
    color: #fff;
    font-family: "Open Sans", sans-serif;
    font-size: 15px;
    font-weight: 700;
}

/* Taskbar */
.taskbar {
    height: 50px;
    flex: none;
    display: flex;
    background-color: #05060a;
    color: #fff;
}
.task-item {
    width: 61px;
    height: 50px;
    flex: none;
    display: flex;
    align-items: center;
    justify-content: center;
    position: relative;
}
.task-item:nth-child(1) {
    width: 60px;
}
.task-item:nth-child(4) {
    width: 63px;
}
.task-running::after {
    content: "";
    position: absolute;
    left: 5px;
    right: 5px;
    bottom: 0;
    height: 3px;
    background-color: #76b9ed;
}
.task-excel {
    margin-left: 1px;
    background-color: #9b5a22;
    border-bottom: 3px solid #f07a10;
}
.excel-x {
    position: absolute;
    left: 19px;
    top: 12px;
    font-size: 14px;
    font-weight: 700;
    color: #fff;
}
.task-chrome {
    margin-left: 1px;
    background-color: #3a3a3e;
    border-bottom: 3px solid #76b9ed;
}
.tray {
    margin-left: auto;
    display: flex;
    align-items: center;
    padding-right: 31px;
    font-size: 15px;
}
.tray-net {
    margin-left: 12px;
}
.tray-sound {
    margin-left: 10px;
    height: 20px;
}
.tray-lang {
    margin-left: 10px;
    font-size: 15px;
}
.tray-clock {
    display: flex;
    flex-direction: column;
    align-items: center;
    width: 72px;
    margin-left: 15px;
    font-size: 14.500px;
    line-height: 24px;
}
.tray-notify {
    margin-left: 21px;
}
```
